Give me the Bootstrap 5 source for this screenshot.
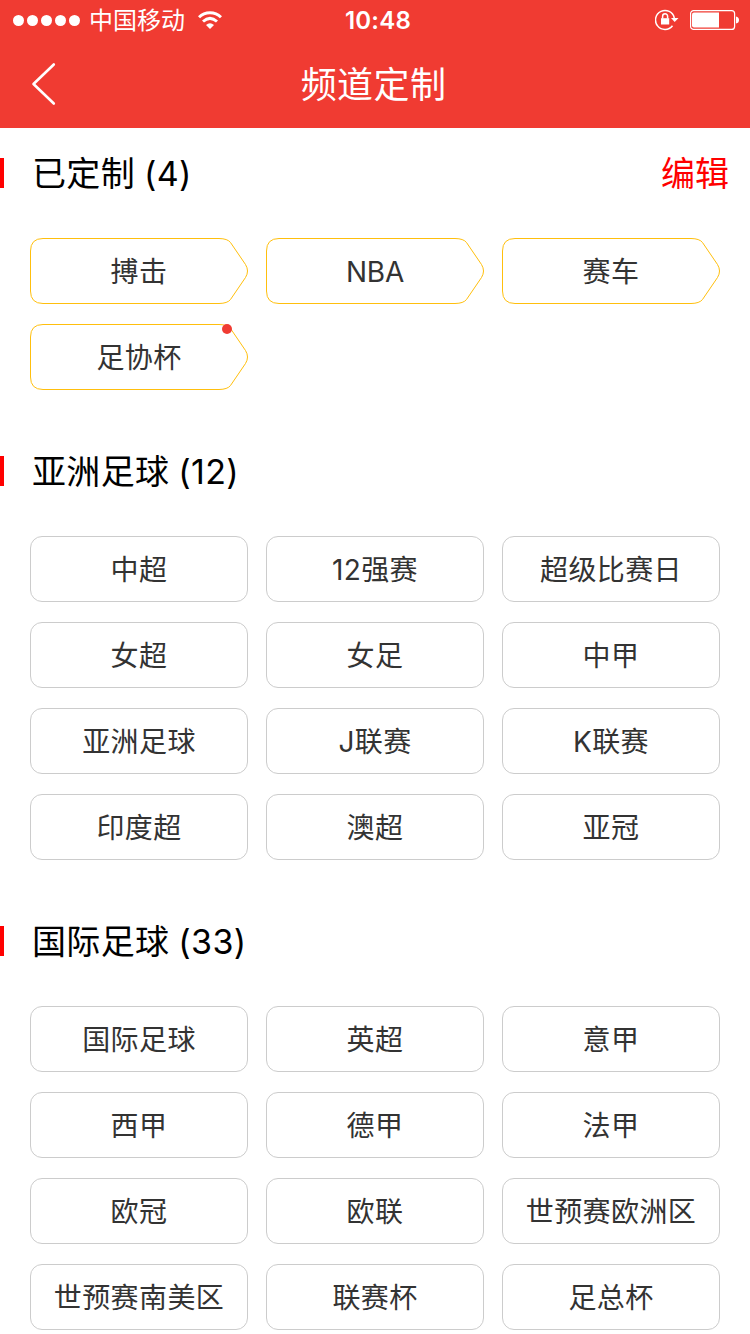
<!DOCTYPE html>
<html lang="zh-CN">
<head>
<meta charset="utf-8">
<meta name="viewport" content="width=device-width, initial-scale=1">
<title>频道定制</title>
<link href="https://cdn.jsdelivr.net/npm/bootstrap@5.3.0/dist/css/bootstrap.min.css" rel="stylesheet">
<style>
  body { font-family: Inter, "Noto Sans CJK SC", sans-serif; color: #000; background: #fff; height: 1334px; overflow: hidden; }
  .app-head { background: #f03b32; height: 128px; color: #fff; }
  .status { height: 40px; font-size: 24px; line-height: 40px; padding: 0 11px 0 13px; }
  .status > div { flex: 1 1 0; }
  .signal { gap: 3px; margin-right: 9px; }
  .signal i { width: 11px; height: 11px; border-radius: 50%; background: #fff; }
  .carrier { padding-top: 2px; }
  .wifi { margin-left: 13px; }
  .battery { margin-left: 11px; }
  .clock { font-weight: 600; letter-spacing: .25px; padding: 2px 0 0 4px; }
  .titlebar { height: 88px; display: grid; grid-template-columns: 100px 1fr 100px; }
  .titlebar h1 { font-size: 36px; font-weight: 400; letter-spacing: .4px; line-height: 86px; padding: 2px 3px 0 0; }
  .back { padding-left: 31px; }
  .sec { margin-bottom: 36px; }
  .sec-head { height: 90px; margin-bottom: 20px; padding-right: 21px; }
  .sec-head::before { content: ""; width: 4px; height: 30px; background: #f00; margin-right: 28px; }
  .sec-head h2 { font-size: 34px; font-weight: 400; letter-spacing: .35px; word-spacing: -1px; line-height: 50px; padding-top: 1px; }
  .edit { font-size: 34px; line-height: 50px; color: #f00; padding-top: 1px; }
  .chips { display: grid; grid-template-columns: repeat(3, 218px); gap: 20px 18px; padding: 0 30px; }
  .chip { --bs-btn-color: #333; --bs-btn-border-color: #ccc; --bs-btn-border-radius: 12px; --bs-btn-padding-x: 0; --bs-btn-padding-y: 0;
          --bs-btn-font-size: 28px; --bs-btn-line-height: 64px; height: 66px; letter-spacing: .4px; white-space: nowrap; padding-top: 1px; }
  .chip.tagged { border: 0; --bs-btn-line-height: 66px; }
  .chip.latin { letter-spacing: -.3px; }
  .tagged svg { position: absolute; left: 0; top: 0; }
  .dot { position: absolute; left: 192px; top: 0; width: 10px; height: 10px; border-radius: 50%; background: #f03b32; }
</style>
</head>
<body>
<svg width="0" height="0" class="position-absolute">
  <symbol id="tag" viewBox="0 0 218 66">
    <path d="M13 .5H189Q197.500 .6 200.500 4.500L215.500 26.500Q219.500 33 215.500 39.500L200.500 61.500Q197.500 65.400 189 65.500H13Q.5 65.500 .5 53V13Q.5 .5 13 .5Z" fill="none" stroke="#ffbf0d"/>
  </symbol>
</svg>
<header class="app-head">
  <div class="status d-flex align-items-center">
    <div class="d-flex align-items-center">
      <span class="signal d-flex"><i></i><i></i><i></i><i></i><i></i></span>
      <span class="carrier">中国移动</span>
      <svg class="wifi" width="24" height="18" viewBox="0 0 24 18" fill="none" stroke="#fff" stroke-width="3">
        <path d="M1 6.300C7 .2 17 .2 23 6.300" /><path d="M5 10.500Q12 4.300 19 10.500"/><path d="M12 18 8 13.900Q12 10.600 16 13.900Z" fill="#fff" stroke="none"/>
      </svg>
    </div>
    <span class="clock">10:48</span>
    <div class="d-flex align-items-center justify-content-end">
      <svg width="24" height="22" viewBox="0 0 24 22" fill="none" stroke="#fff">
        <path d="M19.300 9A9.500 9.500 0 1 0 17.500 16.800" stroke-width="1.500"/><path d="M16 9H23.500L19.700 13Z" fill="#fff" stroke="none"/>
        <path d="M6 9.200H14.200V15.500H6Z" fill="#fff" stroke="none"/><path d="M7.600 9.500V7.200a2.500 2.500 0 0 1 5 0V9.500" stroke-width="1.500"/>
      </svg>
      <svg class="battery" width="49" height="20" viewBox="0 0 49 20">
        <rect x=".6" y=".6" width="44" height="18.800" rx="3" fill="none" stroke="#fff" stroke-width="1.200"/>
        <path d="M4 2.500H29V17.500H4Q2 17.500 2 15.500V4.500Q2 2.500 4 2.500Z" fill="#fff"/><path d="M46 6.500Q49 7 49 10T46 13.500Z" fill="#fff"/>
      </svg>
    </div>
  </div>
  <nav class="titlebar align-items-center">
    <a href="#" class="back d-flex" aria-label="返回"><svg width="25" height="44" viewBox="0 0 25 44"><path d="M22.800 2.500 2.500 22 22.800 41.500" fill="none" stroke="#fff" stroke-width="2.600" stroke-linecap="round" stroke-linejoin="round"/></svg></a>
    <h1 class="m-0 text-center">频道定制</h1>
  </nav>
</header>
<main>
  <section class="sec">
    <div class="sec-head d-flex align-items-center"><h2 class="m-0">已定制 (4)</h2><a class="edit ms-auto text-decoration-none" href="#">编辑</a></div>
    <div class="chips">
      <button class="btn chip tagged position-relative"><svg width="218" height="66"><use href="#tag"/></svg>搏击</button>
      <button class="btn chip tagged latin position-relative"><svg width="218" height="66"><use href="#tag"/></svg>NBA</button>
      <button class="btn chip tagged position-relative"><svg width="218" height="66"><use href="#tag"/></svg>赛车</button>
      <button class="btn chip tagged position-relative"><svg width="218" height="66"><use href="#tag"/></svg>足协杯<span class="dot"></span></button>
    </div>
  </section>
  <section class="sec">
    <div class="sec-head d-flex align-items-center"><h2 class="m-0">亚洲足球 (12)</h2></div>
    <div class="chips">
      <button class="btn chip">中超</button><button class="btn chip">12强赛</button><button class="btn chip">超级比赛日</button>
      <button class="btn chip">女超</button><button class="btn chip">女足</button><button class="btn chip">中甲</button>
      <button class="btn chip">亚洲足球</button><button class="btn chip">J联赛</button><button class="btn chip">K联赛</button>
      <button class="btn chip">印度超</button><button class="btn chip">澳超</button><button class="btn chip">亚冠</button>
    </div>
  </section>
  <section>
    <div class="sec-head d-flex align-items-center"><h2 class="m-0">国际足球 (33)</h2></div>
    <div class="chips">
      <button class="btn chip">国际足球</button><button class="btn chip">英超</button><button class="btn chip">意甲</button>
      <button class="btn chip">西甲</button><button class="btn chip">德甲</button><button class="btn chip">法甲</button>
      <button class="btn chip">欧冠</button><button class="btn chip">欧联</button><button class="btn chip">世预赛欧洲区</button>
      <button class="btn chip">世预赛南美区</button><button class="btn chip">联赛杯</button><button class="btn chip">足总杯</button>
    </div>
  </section>
</main>
<script src="https://cdn.jsdelivr.net/npm/bootstrap@5.3.0/dist/js/bootstrap.bundle.min.js"></script>
</body>
</html>
